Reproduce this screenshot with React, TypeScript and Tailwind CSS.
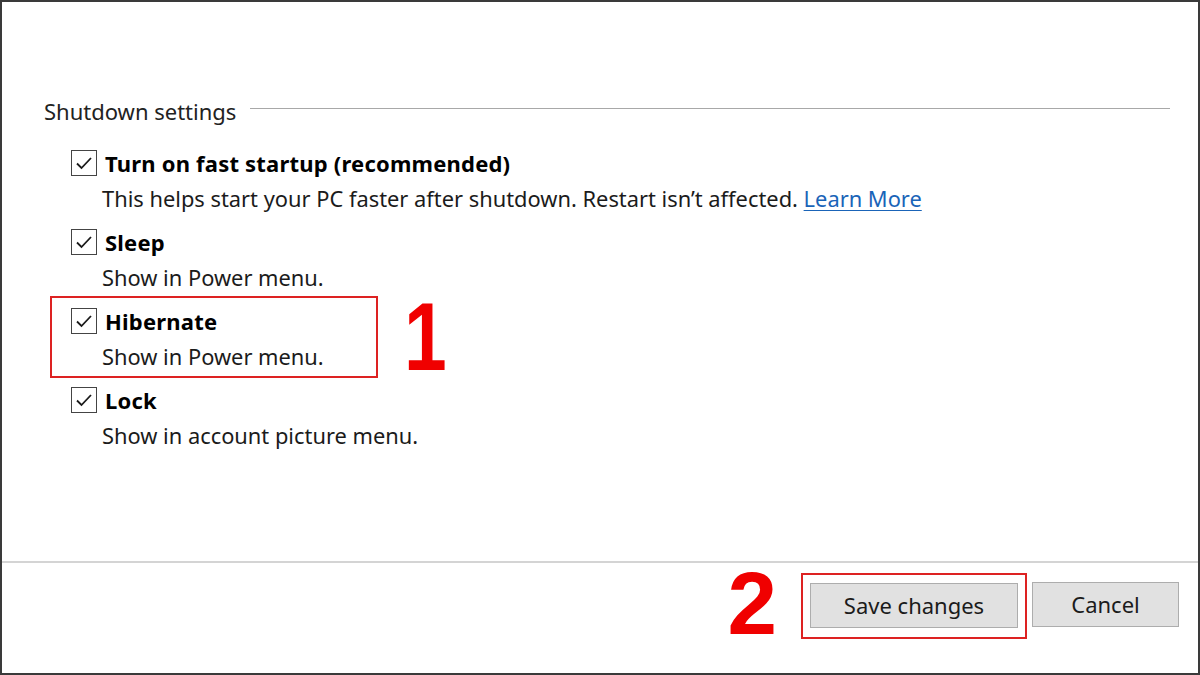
import React from "react";

const font = { fontFamily: '"Noto Sans", "Open Sans", Arial, sans-serif' };
const numFont = { fontFamily: '"Liberation Sans", Arial, sans-serif' };

function Check() {
  return (
    <div className="w-[26px] h-[26px] border border-[#444] bg-white flex items-center justify-center shrink-0">
      <svg width="18" height="14" viewBox="0 0 18 14" fill="none">
        <path d="M2 7.5 L6.5 12 L16 2" stroke="#1a1a1a" strokeWidth="1.8" />
      </svg>
    </div>
  );
}

function Item({ title, children }: { title: string; children: React.ReactNode }) {
  return (
    <div className="flex flex-col">
      <div className="h-[36px] flex items-center pl-[69px]">
        <Check />
        <span className="ml-[8px] text-[22px] font-bold text-black tracking-[0.2px]">{title}</span>
      </div>
      <div className="h-[43px] pl-[100px] text-[21.85px] leading-[36px] text-[#1b1b1b]">{children}</div>
    </div>
  );
}

export default function App() {
  return (
    <div
      className="w-[1200px] h-[675px] bg-white border-2 border-[#3a3a3a] flex flex-col overflow-hidden"
      style={font}
    >
      <div className="flex-1 flex flex-col pt-[94px]">
        <div className="flex items-center pl-[42px] pr-[28px] h-[30px]">
          <span className="text-[22px] text-[#222]">Shutdown settings</span>
          <div className="flex-1 ml-[14px] h-px bg-[#a8a8a8] mt-[-5px]" />
        </div>
        <div className="mt-[19px] flex flex-col">
          <Item title="Turn on fast startup (recommended)">
            This helps start your PC faster after shutdown. Restart isn’t affected.{" "}
            <span className="text-[#1a64b8] underline decoration-1 underline-offset-[3px]">Learn More</span>
          </Item>
          <Item title="Sleep">Show in Power menu.</Item>
          <div className="relative">
            <Item title="Hibernate">Show in Power menu.</Item>
            <div className="absolute left-[48px] top-[-7px] w-[328px] h-[82px] border-2 border-[#dd2222]" />
            <div
              className="absolute left-[402px] top-[-14px] text-[96px] font-bold text-[#f00000] leading-none scale-x-[0.8] origin-left"
              style={numFont}
            >
              1
            </div>
          </div>
          <Item title="Lock">Show in account picture menu.</Item>
        </div>
      </div>
      <div className="h-[112px] border-t-2 border-[#d4d4d4] flex justify-end items-start pt-[19px] pr-[19px]">
        <div className="text-[89px] font-bold text-[#f00000] leading-none mr-[24px] mt-[-23px]" style={numFont}>
          2
        </div>
        <div className="border-2 border-[#dd2222] px-[7px] pt-[8px] pb-[9px] mt-[-9px] mr-[5px]">
          <button className="w-[208px] h-[45px] bg-[#e1e1e1] border border-[#adadad] text-[22px] text-[#1b1b1b]">
            Save changes
          </button>
        </div>
        <button className="w-[147px] h-[45px] bg-[#e1e1e1] border border-[#adadad] text-[22px] text-[#1b1b1b]">
          Cancel
        </button>
      </div>
    </div>
  );
}
